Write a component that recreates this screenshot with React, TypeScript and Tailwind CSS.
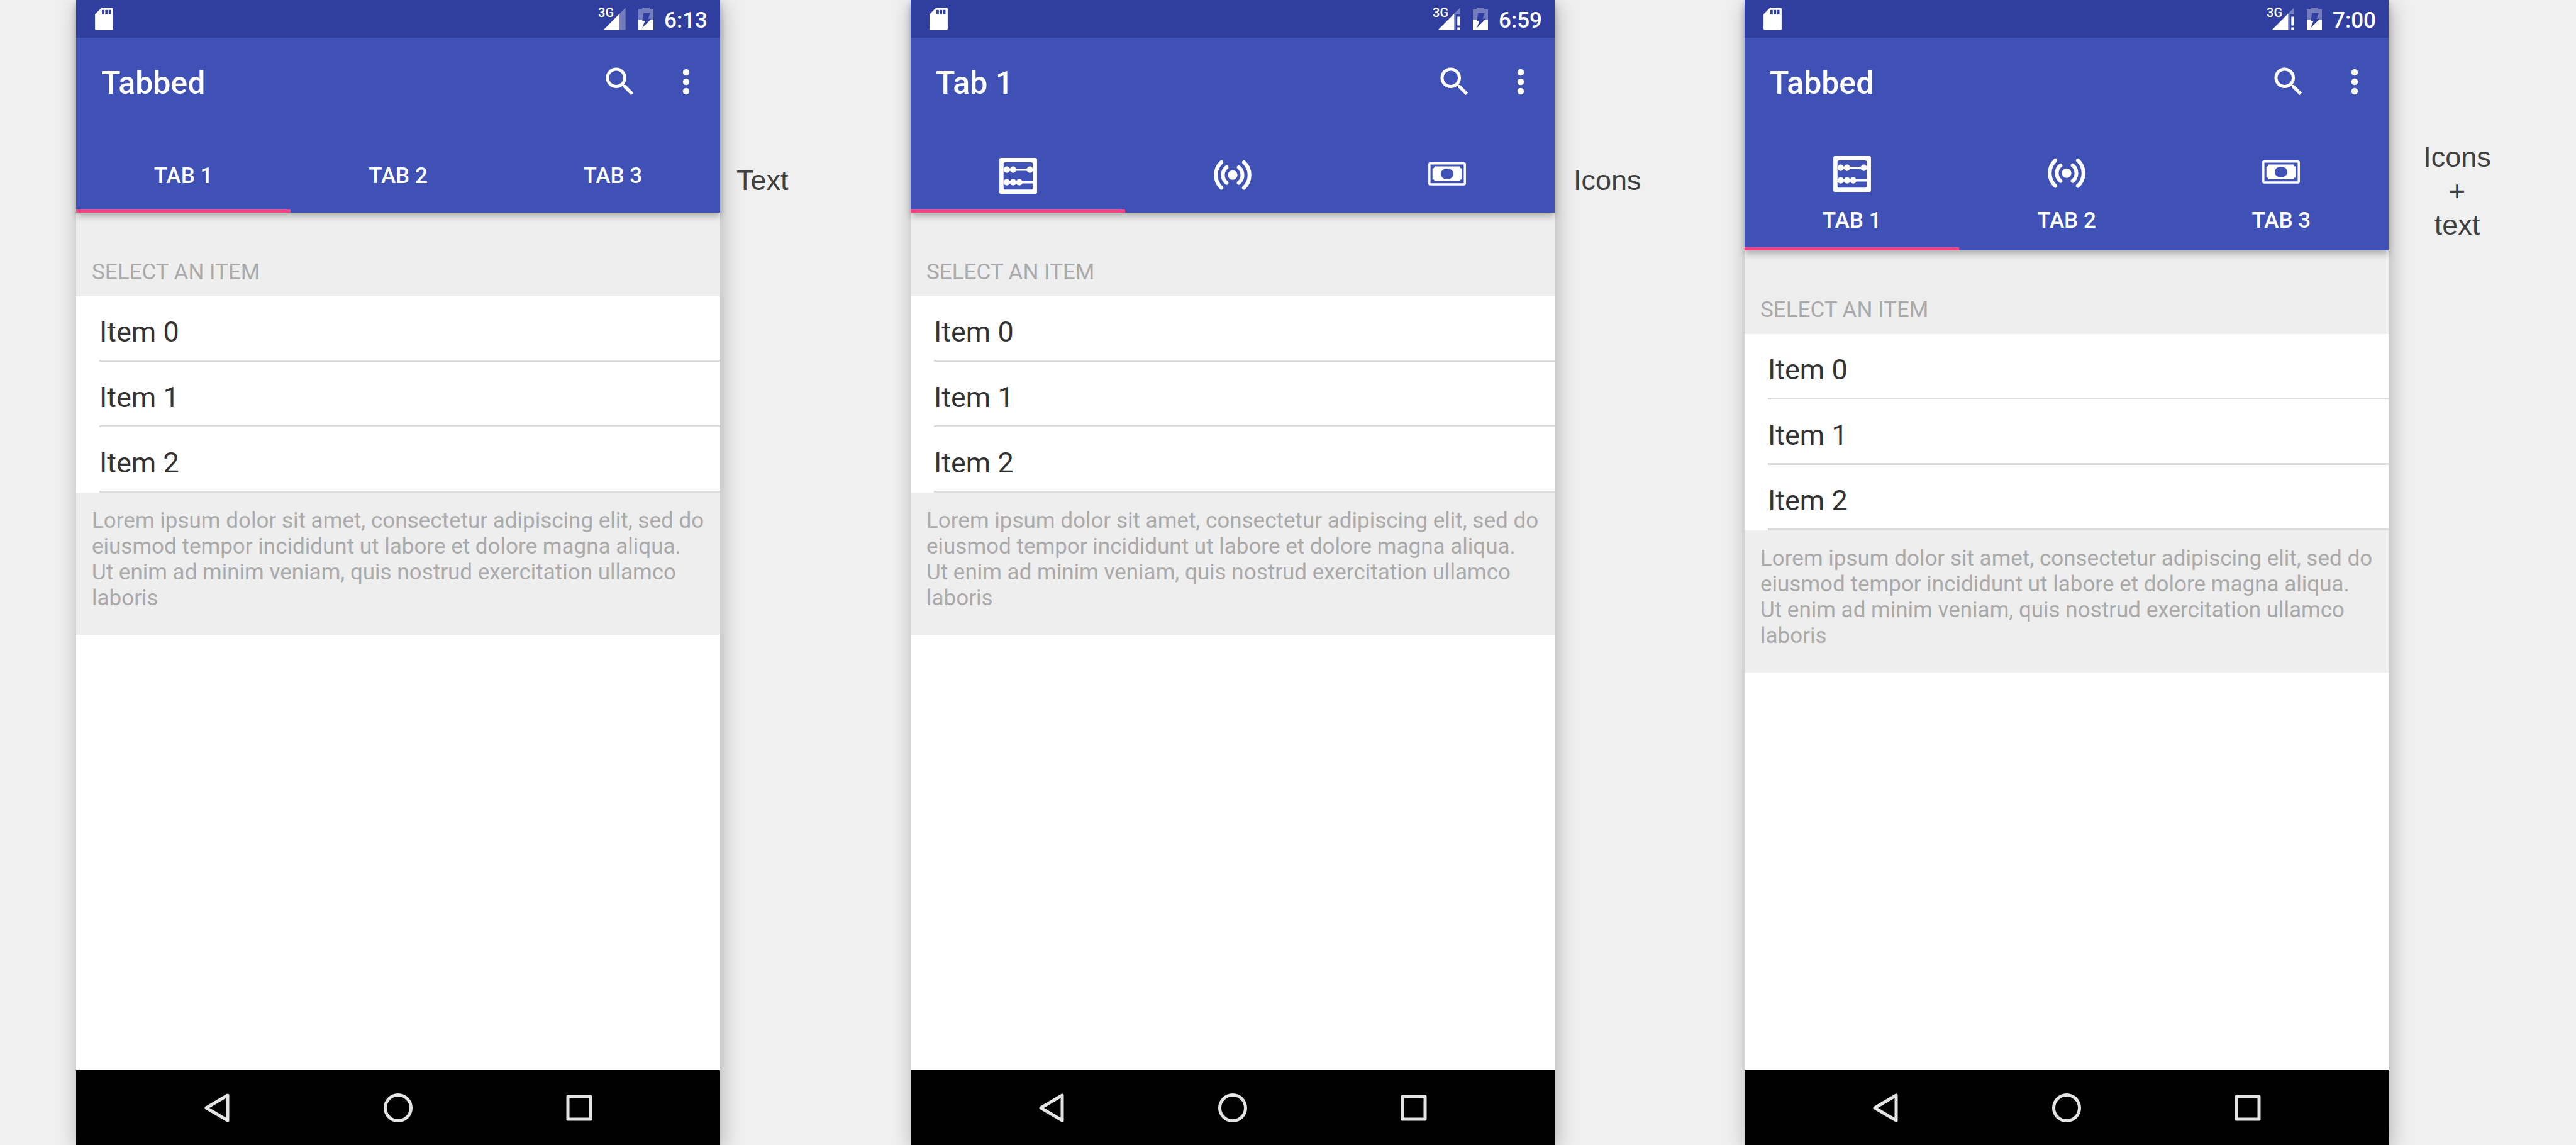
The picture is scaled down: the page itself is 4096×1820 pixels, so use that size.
import React from 'react';

type TabKind = 'text' | 'icons' | 'both';

function SdCardIcon() {
  return (
    <svg viewBox="0 0 92 115" className="h-9 w-[29px]" aria-hidden="true">
      <path fill="#fff" d="M34 0h50a8 8 0 0 1 8 8v99a8 8 0 0 1-8 8H8a8 8 0 0 1-8-8V34z" />
      <path fill="#303f9f" d="M35 12h12v23H35zM52 12h12v23H52zM69 12h12v23H69z" />
    </svg>
  );
}

function SignalIcon({ warning }: { warning: boolean }) {
  return (
    <svg viewBox="0 0 114 114" className="size-9" aria-hidden="true">
      {warning ? (
        <>
          <path fill="#fff" fillOpacity=".33" d="M113 1v33H91v79h-9V32z" />
          <path fill="#fff" d="M83 31v82H1zM99 46h13v44H99zM99 100h13v13H99z" />
        </>
      ) : (
        <>
          <path fill="#fff" fillOpacity=".33" d="M113 1v112H82V32z" />
          <path fill="#fff" d="M82 32v81H1z" />
        </>
      )}
    </svg>
  );
}

function BatteryIcon() {
  return (
    <svg viewBox="0 0 76 114" className="h-9 w-6" aria-hidden="true">
      <path fill="#fff" fillOpacity=".33" d="M20 0h37v8h19v53H0V8h20z" />
      <path fill="#fff" d="M0 61h76v53H0z" />
      <path fill="#303f9f" d="M26 28h34L49 56h17L19 103l14-36H20z" />
    </svg>
  );
}

function SearchIcon() {
  return (
    <svg viewBox="0 0 24 24" className="size-[60px]" fill="#fff" aria-hidden="true">
      <path d="M15.5 14h-.79l-.28-.27A6.471 6.471 0 0 0 16 9.5 6.5 6.5 0 1 0 9.5 16c1.61 0 3.09-.59 4.23-1.57l.27.28v.79l5 4.99L20.49 19l-4.99-5zm-6 0C7.01 14 5 11.99 5 9.5S7.01 5 9.5 5 14 7.01 14 9.5 11.99 14 9.5 14z" />
    </svg>
  );
}

function MoreIcon() {
  return (
    <svg viewBox="0 0 24 24" className="size-[60px]" fill="#fff" aria-hidden="true">
      <circle cx="12" cy="6" r="2.1" />
      <circle cx="12" cy="12" r="2.1" />
      <circle cx="12" cy="18" r="2.1" />
    </svg>
  );
}

function AbacusIcon() {
  return (
    <svg viewBox="0 0 189 180" className="h-[57px] w-[60px]" aria-hidden="true">
      <rect width="189" height="180" rx="9" fill="#fff" />
      <rect x="21" y="22" width="147" height="137" rx="9" fill="#3f51b5" />
      <g fill="#fff">
        <path d="M37 54h116v11H37zM37 117h131v11H37z" />
        <circle cx="37" cy="59" r="16" />
        <circle cx="69" cy="59" r="16" />
        <circle cx="153" cy="59" r="16" />
        <circle cx="37" cy="122" r="16" />
        <circle cx="69" cy="122" r="16" />
        <circle cx="100" cy="122" r="16" />
      </g>
    </svg>
  );
}

function BroadcastIcon() {
  return (
    <svg viewBox="0 0 189 180" className="h-[57px] w-[60px]" aria-hidden="true">
      <circle cx="94.5" cy="86" r="24" fill="#fff" />
      <g fill="none" stroke="#fff" strokeWidth="19" strokeLinecap="round">
        <path d="M64 47a50 50 0 0 0 0 78M38 22a87 87 0 0 0 0 128" />
        <path d="M125 47a50 50 0 0 1 0 78M151 22a87 87 0 0 1 0 128" />
      </g>
    </svg>
  );
}

function CashIcon() {
  return (
    <svg viewBox="0 0 189 180" className="h-[57px] w-[60px]" aria-hidden="true">
      <rect x="5.5" y="27.5" width="178" height="105" rx="4" fill="none" stroke="#fff" strokeWidth="11" />
      <path
        fill="#fff"
        d="M31 43h127a10 10 0 0 0 10 10v54a10 10 0 0 0-10 10H31a10 10 0 0 0-10-10V53a10 10 0 0 0 10-10z"
      />
      <ellipse cx="94.5" cy="80" rx="32" ry="27" fill="#3f51b5" />
    </svg>
  );
}

const TABS = [
  { label: 'TAB 1', icon: <AbacusIcon /> },
  { label: 'TAB 2', icon: <BroadcastIcon /> },
  { label: 'TAB 3', icon: <CashIcon /> },
];

const ITEMS = ['Item 0', 'Item 1', 'Item 2'];

function TabButton({ kind, label, icon, active }: { kind: TabKind; label: string; icon: React.ReactNode; active: boolean }) {
  return (
    <button
      type="button"
      role="tab"
      aria-selected={active}
      aria-label={label}
      className={
        'relative flex flex-col items-center text-[35px] leading-[41px] font-medium text-white ' +
        (kind === 'both' ? 'h-[199px] gap-[25px] pt-[49px]' : 'h-[139px] justify-center pt-[22px]')
      }
    >
      {kind !== 'text' && icon}
      {kind !== 'icons' && <span>{label}</span>}
      {active && <span className="absolute inset-x-0 bottom-0 h-[5px] bg-[#ff4081]" />}
    </button>
  );
}

function Phone({ kind, title, time, warning }: { kind: TabKind; title: string; time: string; warning: boolean }) {
  return (
    <section className="flex min-w-0 flex-col bg-white shadow-[3px_8px_32px_rgba(0,0,0,0.27)]">
      <header className="relative bg-[#3f51b5] text-white shadow-[0_6px_10px_rgba(0,0,0,0.26)]">
        <div className="flex h-[60px] items-center bg-[#303f9f] pr-5 pl-[30px]">
          <SdCardIcon />
          <div className="relative mr-5 ml-auto">
            <SignalIcon warning={warning} />
            <span className="absolute top-0 -left-2 text-[20px] leading-4 font-medium">3G</span>
          </div>
          <BatteryIcon />
          <time className="ml-[17px] pt-1 text-[35px] leading-[41px] font-medium">{time}</time>
        </div>
        <div className="flex h-[139px] items-center pr-6 pl-10">
          <h1 className="mr-auto pt-1 text-[50px] leading-[60px] font-medium">{title}</h1>
          <button type="button" aria-label="Search">
            <SearchIcon />
          </button>
          <button type="button" aria-label="More options" className="ml-[45px]">
            <MoreIcon />
          </button>
        </div>
        <div role="tablist" className="grid grid-cols-3">
          {TABS.map((tab, i) => (
            <TabButton key={tab.label} kind={kind} label={tab.label} icon={tab.icon} active={i === 0} />
          ))}
        </div>
      </header>

      <h2 className="flex h-[133px] items-end bg-[#eee] px-[25px] pb-[18px] text-[35px] leading-[41px] text-[#aaa]">
        SELECT AN ITEM
      </h2>
      <ul className="pl-[37px]">
        {ITEMS.map((item) => (
          <li key={item} className="border-b-3 border-[#dcdcdc]">
            <button
              type="button"
              className="flex h-[101px] w-full items-center pt-3 text-left text-[45px] leading-[54px] text-[#333]"
            >
              {item}
            </button>
          </li>
        ))}
      </ul>
      <p className="bg-[#eee] pt-6 pr-5 pb-[38px] pl-[25px] text-[35px] leading-[41px] text-[#aaa]">
        Lorem ipsum dolor sit amet, consectetur adipiscing elit, sed do eiusmod tempor incididunt ut labore et dolore
        magna aliqua. Ut enim ad minim veniam, quis nostrud exercitation ullamco laboris
      </p>

      <nav className="mt-auto flex h-[119px] items-center justify-center gap-60 bg-black">
        <button type="button" aria-label="Back">
          <svg viewBox="0 0 48 48" className="size-12" fill="none" stroke="#e4e4e4" strokeWidth="5" strokeLinejoin="round">
            <path d="M41 4v40L7 24z" />
          </svg>
        </button>
        <button type="button" aria-label="Home">
          <svg viewBox="0 0 48 48" className="size-12" fill="none" stroke="#e4e4e4" strokeWidth="5">
            <circle cx="24" cy="24" r="20.5" />
          </svg>
        </button>
        <button type="button" aria-label="Recent apps">
          <svg viewBox="0 0 48 48" className="size-12" fill="none" stroke="#e4e4e4" strokeWidth="5" strokeLinejoin="round">
            <path d="M6 6h36v36H6z" />
          </svg>
        </button>
      </nav>
    </section>
  );
}

export default function App() {
  return (
    <main className="grid min-h-screen grid-cols-[121fr_1024fr_303fr_1024fr_302fr_1024fr_298fr] overflow-hidden bg-[#f0f0f0] font-[Roboto,sans-serif]">
      <div />
      <Phone kind="text" title="Tabbed" time="6:13" warning={false} />
      <p className="pt-[260px] pl-[26px] font-['Liberation_Sans',sans-serif] text-[45px] leading-[54px] text-[#404040]">
        Text
      </p>
      <Phone kind="icons" title="Tab 1" time="6:59" warning />
      <p className="pt-[260px] pl-[30px] font-['Liberation_Sans',sans-serif] text-[45px] leading-[54px] text-[#404040]">
        Icons
      </p>
      <Phone kind="both" title="Tabbed" time="7:00" warning />
      <p className="pt-[223px] pr-20 text-center font-['Liberation_Sans',sans-serif] text-[45px] leading-[54px] text-[#404040]">
        Icons
        <br />+<br />
        text
      </p>
    </main>
  );
}
